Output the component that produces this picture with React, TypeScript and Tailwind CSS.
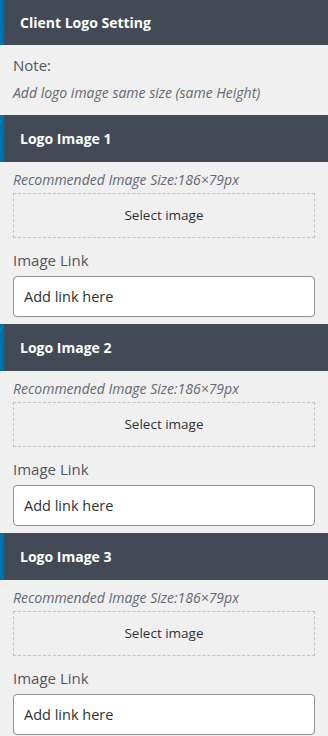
const sections = ["Logo Image 1", "Logo Image 2", "Logo Image 3"];

function Header({ title }: { title: string }) {
  return (
    <div className="h-[47px] flex items-center bg-[#434a56] border-l-4 border-[#0073aa] pl-4">
      <h2 className="text-[14px] font-bold text-white">{title}</h2>
    </div>
  );
}

export default function App() {
  return (
    <div className="w-[328px] min-h-[736px] bg-[#f0f0f0] font-['Open_Sans',sans-serif]">
      <div className="h-[45px] flex items-center bg-[#434a56] border-l-4 border-[#0073aa] pl-4">
        <h1 className="text-[14px] font-bold text-white">Client Logo Setting</h1>
      </div>
      <div className="px-[13px] pt-[9px] pb-[13px]">
        <p className="text-[15px] text-[#50575e] leading-[22px]">Note:</p>
        <p className="mt-[7px] text-[14px] italic text-[#646970] leading-[19px]">
          Add logo image same size (same Height)
        </p>
      </div>
      {sections.map((s) => (
        <section key={s}>
          <Header title={s} />
          <div className="px-[13px] pt-[8px] pb-[7px]">
            <p className="text-[14px] italic text-[#646970] leading-[19px]">
              Recommended Image Size:186×79px
            </p>
            <button className="mt-[4px] w-full h-[45px] border border-dashed border-[#c3c4c7] text-[13.5px] text-[#2c3338]">
              Select image
            </button>
            <label className="block mt-[11px] text-[15px] text-[#50575e] leading-[22px]">Image Link</label>
            <input
              className="mt-[5px] w-full h-[41px] rounded-[4px] border border-[#8c8f94] bg-white px-[10px] text-[14.5px] text-[#2c3338] placeholder:text-[#2c3338] outline-none"
              placeholder="Add link here"
            />
          </div>
        </section>
      ))}
    </div>
  );
}
